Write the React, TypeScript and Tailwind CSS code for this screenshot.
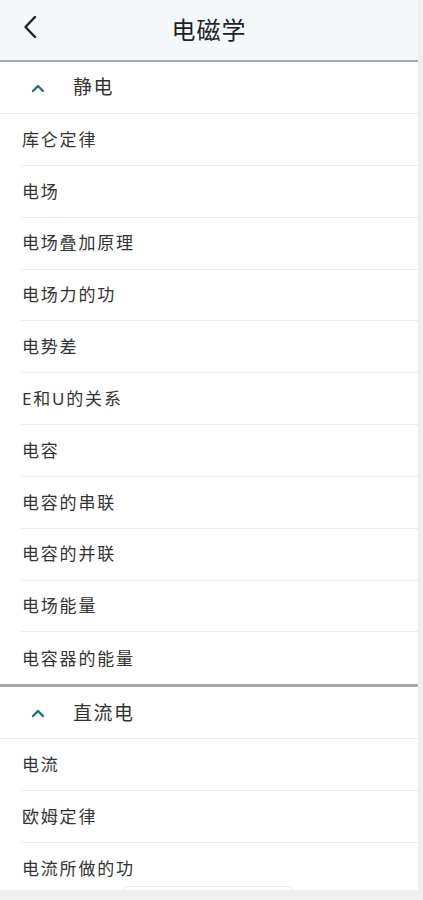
import React from "react";

const sections = [
  {
    title: "静电",
    items: [
      "库仑定律",
      "电场",
      "电场叠加原理",
      "电场力的功",
      "电势差",
      "E和U的关系",
      "电容",
      "电容的串联",
      "电容的并联",
      "电场能量",
      "电容器的能量",
    ],
  },
  {
    title: "直流电",
    items: ["电流", "欧姆定律", "电流所做的功"],
  },
];

const font = {
  fontFamily: '"Noto Sans", "Noto Sans CJK SC", sans-serif',
};

const ChevronUp = () => (
  <svg width="14" height="10" viewBox="0 0 14 10" className="shrink-0">
    <path d="M2 8 L7 3 L12 8" fill="none" stroke="#1d6f86" strokeWidth="2.4" strokeLinecap="round" strokeLinejoin="round" />
  </svg>
);

const BackIcon = () => (
  <svg width="16" height="24" viewBox="0 0 16 24">
    <path d="M13 2 L3.5 12 L13 22" fill="none" stroke="#1f1f1f" strokeWidth="2.4" strokeLinecap="round" strokeLinejoin="round" />
  </svg>
);

export default function App() {
  return (
    <div className="h-[900px] w-[423px] bg-[#efefef] overflow-hidden" style={font}>
      <div className="relative h-[890px] w-[418px] bg-white overflow-hidden">
        <div className="relative flex h-[62px] items-center justify-center bg-[#f4f8fb] border-b-2 border-[#a3a9ad]">
          <div className="absolute left-[22px] top-[15px]">
            <BackIcon />
          </div>
          <h1 className="text-[24px] text-[#222] tracking-[1px]">电磁学</h1>
        </div>

        {sections.map((section, si) => (
          <div key={section.title} className={si > 0 ? "border-t-[3px] border-[#a3a9ad]" : ""}>
            <div className="flex h-[52px] items-center border-b border-[#ececec] pl-[31px]">
              <ChevronUp />
              <span className="ml-[28px] text-[19px] text-[#333] tracking-[1.5px]">{section.title}</span>
            </div>
            <ul className="pl-[21px]">
              {section.items.map((item, i) => (
                <li
                  key={item}
                  className={`flex h-[51.85px] items-center pl-px text-[17px] text-[#333] tracking-[1.8px] ${
                    i < section.items.length - 1 ? "border-b border-[#ececec]" : ""
                  }`}
                >
                  {item}
                </li>
              ))}
            </ul>
          </div>
        ))}

        <div className="absolute bottom-0 left-[123px] h-[4px] w-[170px] rounded-t-[4px] border border-b-0 border-[#ececec]" />
      </div>
    </div>
  );
}
